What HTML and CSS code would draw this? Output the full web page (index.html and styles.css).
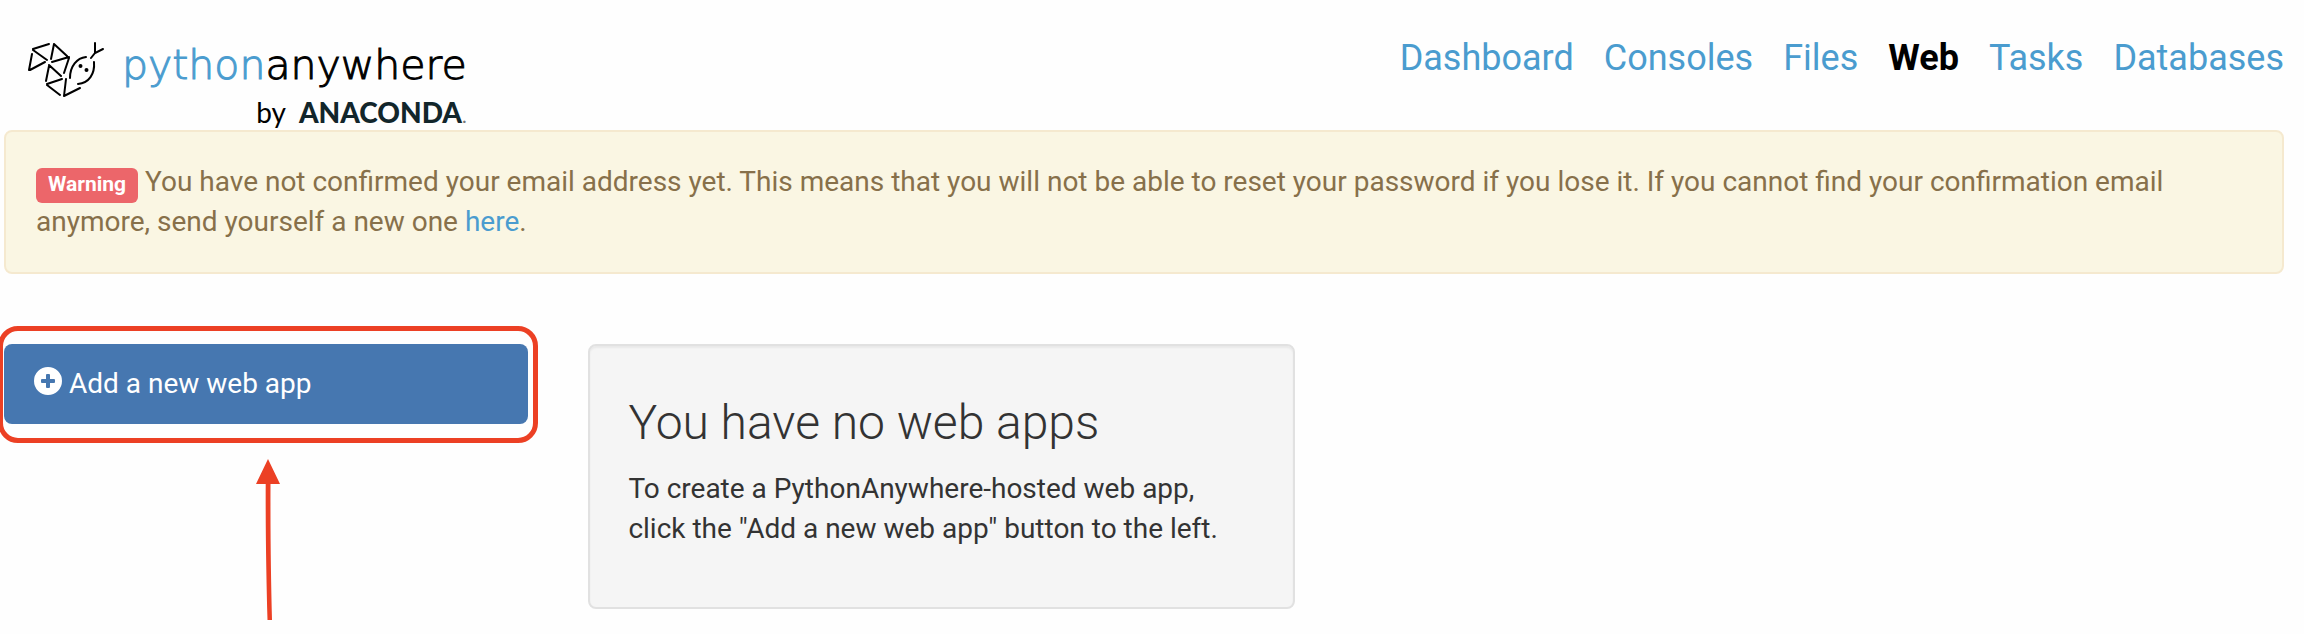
FILE: index.html
```html
<!DOCTYPE html>
<html lang="en">
<head>
<meta charset="utf-8">
<title>Web : PythonAnywhere</title>
<link rel="stylesheet" href="styles.css">
</head>
<body>
<header class="header">
  <a class="logo" href="#">
    <svg class="logo-mark" viewBox="0 0 76 56" width="76" height="56" fill="none" stroke="#000" stroke-width="2" stroke-linecap="round" aria-hidden="true">
      <path d="M5 7 21 2M5 8 19 18M4 12 1 28M2 28 17 20M26 2 23 17M26 2 39 14M24 20 41 15M41 16 36 31M21 24 18 39M21 23 33 34M19 42 34 37M19 43 32 53M38 37 36 54M36 54 52 46"/>
      <path d="M42 36C42 24 49 16 58 15M66 20C67 32 61 41 50 42"/>
      <path d="M67 1V11M75 7 67 11 63 16"/>
      <circle cx="52.500" cy="24" r="1" fill="#000"/>
      <circle cx="58.500" cy="28" r="1" fill="#000"/>
    </svg>
    <span class="logo-text">
      <span class="wordmark"><span class="wordmark-python">python</span>anywhere</span>
      <span class="byline"><span>by</span> <b class="anaconda">ANACONDA<span class="mark">.</span></b></span>
    </span>
  </a>
  <nav class="nav">
    <a href="#">Dashboard</a>
    <a href="#">Consoles</a>
    <a href="#">Files</a>
    <a class="active" href="#" aria-current="page">Web</a>
    <a href="#">Tasks</a>
    <a href="#">Databases</a>
  </nav>
</header>
<main>
  <div class="alert" role="alert"><span class="label">Warning</span> You have not confirmed your email address yet. This means that you will not be able to reset your password if you lose it. If you cannot find your confirmation email anymore, send yourself a new one <a href="#">here</a>.</div>
  <div class="row">
    <div class="sidebar">
      <button class="add" type="button">
        <svg width="28" height="28" viewBox="0 0 28 28" aria-hidden="true"><path fill="#fff" fill-rule="evenodd" d="M14 0a14 14 0 1 0 0 28 14 14 0 0 0 0-28ZM13 7h2a1 1 0 0 1 1 1v4h4a1 1 0 0 1 1 1v2a1 1 0 0 1-1 1h-4v4a1 1 0 0 1-1 1h-2a1 1 0 0 1-1-1v-4H8a1 1 0 0 1-1-1v-2a1 1 0 0 1 1-1h4V8a1 1 0 0 1 1-1Z"/></svg>
        Add a new web app
      </button>
      <div class="highlight"></div>
      <svg class="arrow" width="24" height="162" viewBox="0 0 24 162" aria-hidden="true"><path fill="#ec4024" d="M12 0 24 25H14.500C14.300 80 15 120 16 161H11.500C10.500 120 9.500 80 9.700 25H0Z"/></svg>
    </div>
    <section class="well">
      <h2>You have no web apps</h2>
      <p>To create a PythonAnywhere-hosted web app, click the "Add a new web app" button to the left.</p>
    </section>
  </div>
</main>
</body>
</html>
```
FILE: styles.css
```css
* {
  box-sizing: border-box;
}

body {
  min-height: 100vh;
  margin: 0;
  padding: 0 20px 0 4px;
  background: #fefefe;
  color: #333;
  font: 28px/40px Roboto, "Liberation Sans", sans-serif;
}

a {
  color: #4a9ccf;
  text-decoration: none;
}

.header {
  display: flex;
  justify-content: space-between;
  align-items: flex-start;
  height: 130px;
}

.logo {
  display: flex;
  gap: 18px;
  padding: 42px 0 0 24px;
  color: #000;
}

.logo-text {
  display: flex;
  flex-direction: column;
  align-items: flex-end;
}

.wordmark {
  font: 200 41px/46px "DejaVu Sans", sans-serif;
  -webkit-text-stroke: 1px currentColor;
}

.wordmark-python {
  color: #4a9ccf;
}

.byline {
  display: flex;
  gap: 13px;
  font: 28px/48px Lato, sans-serif;
}

.anaconda {
  color: #12262b;
  font-weight: 900;
}

.mark {
  color: #777;
  font-size: 20px;
  font-weight: 400;
}

.nav {
  display: flex;
  gap: 30px;
  padding-top: 34px;
  font-size: 36px;
  line-height: 48px;
}

.nav .active {
  color: #000;
  font-weight: 700;
}

.alert {
  padding: 30px;
  border: 2px solid #f5e9cf;
  border-radius: 8px;
  background: #faf6e3;
  color: #87704a;
}

.label {
  padding: 4px 12px 7px;
  border-radius: 6px;
  background: #ec666a;
  color: #fff;
  font-size: 21px;
  font-weight: 700;
  line-height: 21px;
}

.row {
  display: grid;
  grid-template-columns: 23% 31%;
  align-items: start;
  gap: 60px;
  padding-top: 70px;
}

.sidebar {
  position: relative;
}

.add {
  display: flex;
  align-items: center;
  gap: 7px;
  width: 100%;
  padding: 20px 30px;
  border: 0;
  border-radius: 8px;
  background: #4677b0;
  color: #fff;
  font: inherit;
}

.add svg {
  margin-bottom: 6px;
}

.highlight {
  position: absolute;
  inset: -18px -10px -19px -6px;
  border: 5px solid #ec4024;
  border-radius: 20px;
  pointer-events: none;
}

.arrow {
  position: absolute;
  top: 115px;
  left: 252px;
}

.well {
  padding: 38px;
  border: 2px solid #e1e1e1;
  border-radius: 8px;
  background: #f5f5f5;
  box-shadow: inset 0 2px 2px rgba(0, 0, 0, 0.05);
}

.well h2 {
  margin: 12px 0 19px;
  font-size: 48px;
  font-weight: 300;
  line-height: 54px;
}

.well p {
  margin: 0 0 20px;
}
```
